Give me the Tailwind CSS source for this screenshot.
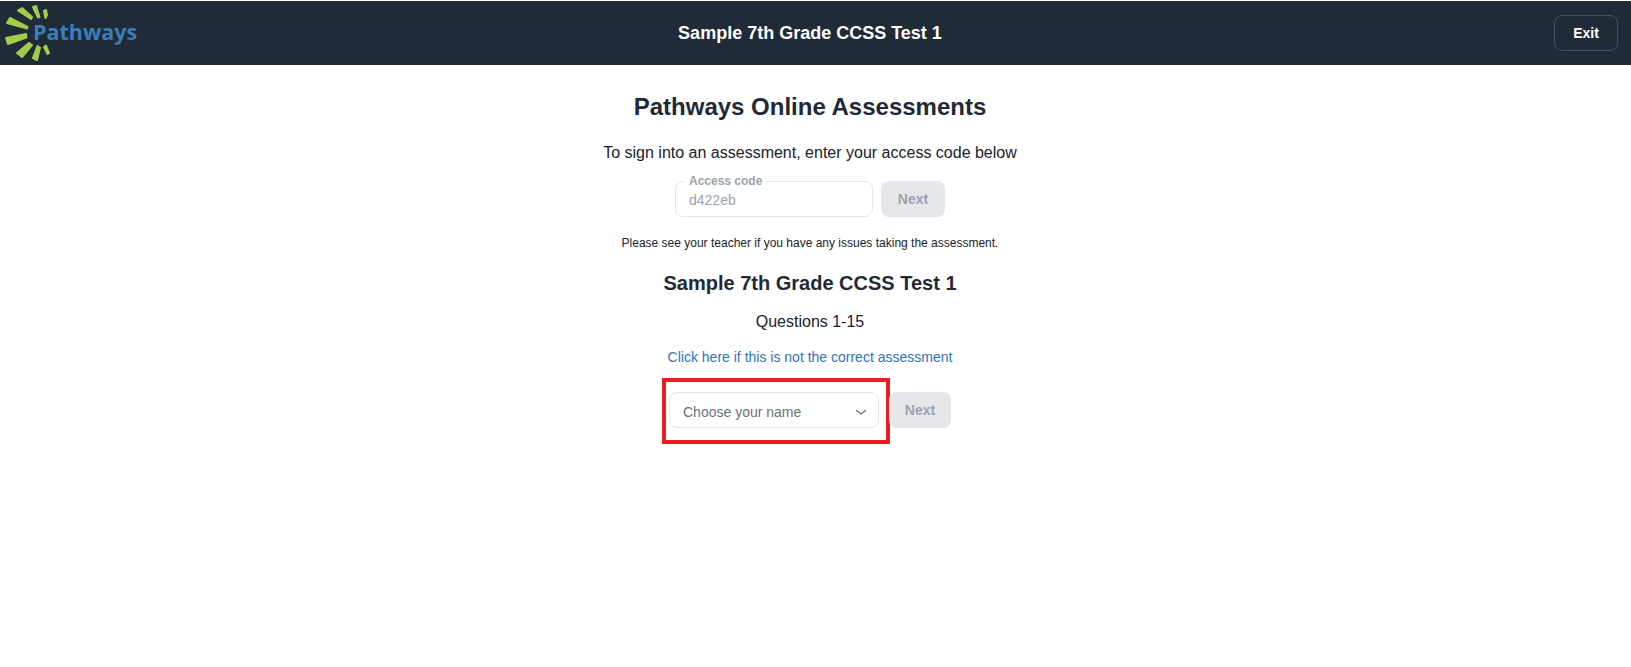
<!DOCTYPE html>
<html lang="en">
  <head>
    <meta charset="UTF-8" />
    <meta name="viewport" content="width=device-width, initial-scale=1.0" />
    <title>Pathways Online Assessments</title>
    <script src="https://cdn.jsdelivr.net/npm/@tailwindcss/browser@4"></script>
  </head>
  <body class="bg-white font-['Liberation_Sans',Arial,sans-serif] text-[#1f2937]">
    <!-- top bar -->
    <header class="mt-px h-[64px] bg-[#212b38] flex items-center justify-between pr-[13px]">
      <div class="relative w-[140px] h-[64px]">
        <svg class="absolute left-0 -top-px" width="60" height="65" viewBox="0 0 60 65" fill="#a1cd4a" stroke="#a1cd4a" stroke-width="2" stroke-linejoin="round">
          <path d="M18 10.5 L22 8 L32 17 L31 19 Z" />
          <path d="M33 7 L36 6 L39.5 17 L38 17.5 Z" />
          <path d="M44 11 L46 10 L47 15 L45.5 18 Z" />
          <path d="M10 18 L7 23 L27 28.5 L27.5 27 Z" />
          <path d="M6 38 L8 44 L26.5 37.5 L26 34 Z" />
          <path d="M17 53 L22 57 L32 45 L29 43 Z" />
          <path d="M33 58 L37 60 L40 47.5 L37.5 46 Z" />
          <path d="M44 47 L46 45.5 L49 53 L47.5 54 Z" />
        </svg>
        <span class="absolute left-[33px] top-[18px] text-[21.5px] leading-[26px] font-bold text-[#3a7db8] font-['Open_Sans',sans-serif]">Pathways</span>
      </div>
      <h2 class="absolute left-0 w-[1620px] text-center text-white font-bold text-[18px] leading-6">Sample 7th Grade CCSS Test 1</h2>
      <button class="w-[64px] h-[36px] rounded-lg border border-[#465161] text-white text-sm font-bold">Exit</button>
    </header>

    <main class="w-[1620px] flex flex-col items-center">
      <h1 class="mt-[26px] text-2xl leading-8 font-bold">Pathways Online Assessments</h1>
      <p class="mt-[18px] text-base leading-6 text-[#1a2230]">To sign into an assessment, enter your access code below</p>

      <div class="mt-[16px] flex gap-2 h-9">
        <div class="relative w-[198px] h-9 rounded-lg border border-[#e5e7eb] pl-[13px] pt-2 text-sm leading-5 text-[#9ca3af]">
          d422eb
          <span class="absolute left-[9px] -top-[9px] bg-white px-1 text-xs leading-4 font-bold text-[#9ca3af]">Access code</span>
        </div>
        <button class="w-16 h-9 rounded-lg bg-[#e5e7eb] text-sm font-bold text-[#9ca3af]">Next</button>
      </div>

      <p class="mt-[18px] text-xs leading-4 text-[#1a2230]">Please see your teacher if you have any issues taking the assessment.</p>
      <h2 class="mt-[18px] text-xl leading-7 font-bold">Sample 7th Grade CCSS Test 1</h2>
      <p class="mt-[13px] text-base leading-6 text-[#1a2230]">Questions 1-15</p>
      <a class="mt-[13px] text-sm leading-5 text-[#2f74c0]" href="#">Click here if this is not the correct assessment</a>

      <div class="mt-[11px] flex items-start pr-[7px]">
        <div class="w-[228px] h-[66px] border-[4px] border-[#ec1c24] pl-[3px] pt-[10px]">
          <div class="w-[210px] h-9 rounded-lg border border-[#e5e7eb] flex items-center justify-between pl-[13px] pr-[10px] pt-[3px] text-sm text-[#6b7280]">
            Choose your name
            <svg width="14" height="14" viewBox="0 0 14 14" fill="none" stroke="#6b7280" stroke-width="1.5" stroke-linecap="round" stroke-linejoin="round"><path d="M2.5 5.5 L7 9 L11.5 5.5" /></svg>
          </div>
        </div>
        <button class="mt-[14px] -ml-px w-[62px] h-9 rounded-lg bg-[#e5e7eb] text-sm font-bold text-[#9ca3af]">Next</button>
      </div>
    </main>
  </body>
</html>
